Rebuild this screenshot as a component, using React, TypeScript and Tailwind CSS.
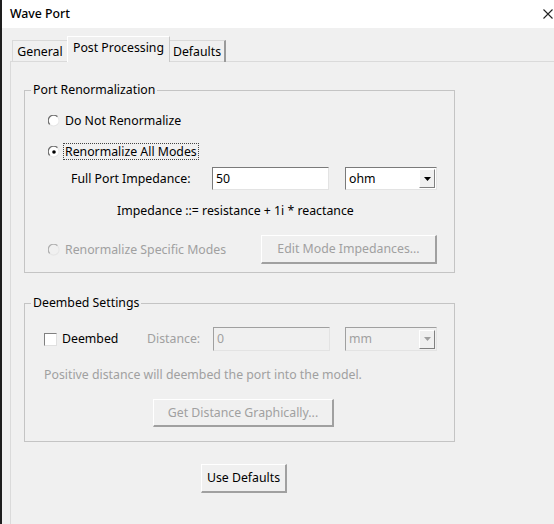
import React from 'react';

const Radio: React.FC<{ checked?: boolean; disabled?: boolean }> = ({ checked, disabled }) => (
    <svg width="12" height="12" viewBox="0 0 12 12" className="shrink-0">
        <circle cx="6" cy="6" r="5.5" fill={disabled ? '#f0f0f0' : '#ffffff'} />
        <path d="M1.8 9.5 A5 5 0 0 1 9.5 1.8" fill="none" stroke={disabled ? '#b0b0b0' : '#707070'} strokeWidth="1.3" />
        <path d="M9.5 1.8 A5 5 0 0 1 1.8 9.5" fill="none" stroke="#e6e6e6" strokeWidth="1.1" />
        {checked && <circle cx="6" cy="6" r="1.8" fill="#000" />}
    </svg>
);

const DropArrow: React.FC<{ disabled?: boolean }> = ({ disabled }) => (
    <div className="w-[16px] h-[19px] bg-[#f0f0f0] border-t border-l border-t-white border-l-white border-b border-r border-b-[#808080] border-r-[#808080] flex items-center justify-center">
        <svg width="7" height="4" viewBox="0 0 7 4">
            <path d="M0 0 L7 0 L3.5 4 Z" fill={disabled ? '#a0a0a0' : '#000'} />
        </svg>
    </div>
);

const Button: React.FC<{ label: string; disabled?: boolean; className?: string }> = ({ label, disabled, className }) => (
    <div
        className={`flex items-center justify-center bg-[#f0f0f0] border-t border-l border-t-white border-l-white border-b-2 border-r-2 border-b-[#a0a0a0] border-r-[#a0a0a0] ${
            disabled ? 'text-[#a0a0a0]' : 'text-black'
        } ${className ?? ''}`}
    >
        {label}
    </div>
);

export default function App() {
    return (
        <div className="w-[554px] h-[524px] flex bg-[#f0f0f0] text-[12.3px] leading-[16px] text-black font-['Noto_Sans','Liberation_Sans',sans-serif] overflow-hidden">
            <div className="w-[2px] bg-[#1e1e1e] shrink-0" />
            <div className="flex-1 flex flex-col">
                {/* Title bar */}
                <div className="h-[28px] bg-white flex items-center justify-between pl-[8px] pr-[1px] shrink-0">
                    <span className="font-medium">Wave Port</span>
                    <svg width="10" height="10" viewBox="0 0 10 10">
                        <path d="M0.5 0.5 L9.5 9.5 M9.5 0.5 L0.5 9.5" stroke="#222" strokeWidth="1.1" />
                    </svg>
                </div>

                <div className="flex-1 flex flex-col pl-[8px] pt-[9px]">
                    {/* Tabs */}
                    <div className="flex items-end h-[25px] pl-[2px] -mb-px relative z-10">
                        <div className="h-[22px] w-[55px] border-t border-l border-[#d9d9d9] flex items-center justify-center">
                            General
                        </div>
                        <div className="h-[26px] w-[103px] bg-[#f0f0f0] border-t border-l border-white border-r border-r-[#c8c8c8] flex items-center justify-center pb-[3px]">
                            Post Processing
                        </div>
                        <div className="h-[22px] w-[56px] border-t border-[#d9d9d9] border-r-2 border-r-[#9a9a9a] flex items-center justify-center">
                            Defaults
                        </div>
                    </div>

                    {/* Panel */}
                    <div className="flex-1 border-t border-l border-[#dadada] pl-[13px] flex flex-col">
                        <fieldset className="w-[431px] border border-[#c4c4c4] mt-[20px] pb-[8px]">
                            <legend className="ml-[6px] px-[2px] leading-[16px]">Port Renormalization</legend>
                            <div className="pl-[23px]">
                                <div className="flex items-center h-[16px] mt-[15px] gap-[5px]">
                                    <Radio />
                                    <span>Do Not Renormalize</span>
                                </div>
                                <div className="flex items-center h-[17px] mt-[14px] gap-[3px]">
                                    <Radio checked />
                                    <span className="border border-dotted border-[#444] px-[1px] h-[17px] flex items-center">
                                        Renormalize All Modes
                                    </span>
                                </div>
                                <div className="flex items-center mt-[7px] h-[23px]">
                                    <span className="ml-[23px] w-[141px]">Full Port Impedance:</span>
                                    <div className="w-[117px] h-[23px] bg-white border-t border-l border-[#7a7a7a] border-b border-r border-b-[#e3e3e3] border-r-[#e3e3e3] flex items-center pl-[3px]">
                                        50
                                    </div>
                                    <div className="ml-[16px] w-[92px] h-[23px] bg-white border-t border-l border-[#7a7a7a] border-b border-r border-b-[#e3e3e3] border-r-[#e3e3e3] flex items-center justify-between pl-[3px] pr-[1px]">
                                        <span>ohm</span>
                                        <DropArrow />
                                    </div>
                                </div>
                                <div className="mt-[13px] h-[16px] ml-[69px]">Impedance ::= resistance + 1i * reactance</div>
                                <div className="flex items-center mt-[16px] h-[29px]">
                                    <Radio disabled />
                                    <span className="ml-[5px] w-[196px] text-[#a0a0a0]">Renormalize Specific Modes</span>
                                    <Button label="Edit Mode Impedances..." disabled className="w-[176px] h-[29px]" />
                                </div>
                            </div>
                        </fieldset>

                        <fieldset className="w-[431px] border border-[#c4c4c4] mt-[22px] pb-[14px]">
                            <legend className="ml-[6px] px-[2px] leading-[16px]">Deembed Settings</legend>
                            <div className="pl-[19px]">
                                <div className="flex items-center mt-[16px] h-[24px]">
                                    <div className="w-[13px] h-[13px] bg-white border-t border-l border-[#808080] border-b border-r border-b-[#e0e0e0] border-r-[#e0e0e0]" />
                                    <span className="ml-[5px] w-[85px]">Deembed</span>
                                    <span className="w-[66px] text-[#a0a0a0]">Distance:</span>
                                    <div className="w-[117px] h-[24px] bg-[#f0f0f0] border-t border-l border-[#a0a0a0] border-b border-r border-b-[#e3e3e3] border-r-[#e3e3e3] flex items-center pl-[3px] text-[#a0a0a0]">
                                        0
                                    </div>
                                    <div className="ml-[15px] w-[92px] h-[24px] bg-[#f0f0f0] border-t border-l border-[#a0a0a0] border-b border-r border-b-[#e3e3e3] border-r-[#e3e3e3] flex items-center justify-between pl-[3px] pr-[1px] text-[#a0a0a0]">
                                        <span>mm</span>
                                        <DropArrow disabled />
                                    </div>
                                </div>
                                <div className="mt-[16px] h-[16px] text-[#a0a0a0]">Positive distance will deembed the port into the model.</div>
                                <div className="mt-[16px] flex">
                                    <Button label="Get Distance Graphically..." disabled className="ml-[109px] w-[181px] h-[28px]" />
                                </div>
                            </div>
                        </fieldset>

                        <div className="mt-[22px] flex">
                            <Button label="Use Defaults" className="ml-[177px] w-[86px] h-[29px]" />
                        </div>
                    </div>
                </div>
            </div>
        </div>
    );
}
